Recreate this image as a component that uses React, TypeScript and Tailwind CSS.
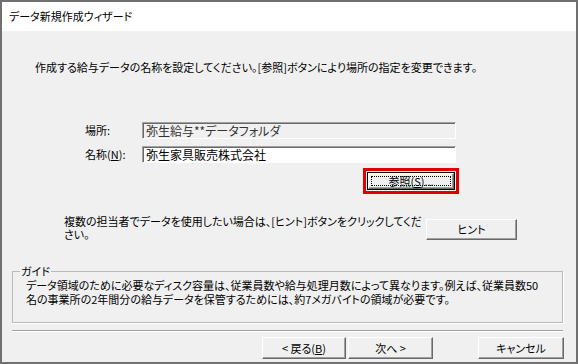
import React from 'react';

const FONT = "font-['Noto_Sans_CJK_JP','Noto_Sans',sans-serif] [font-feature-settings:'palt'] text-[11px] text-black";

// classic raised 3D button face
const RAISED =
  'border border-t-white border-l-white border-r-[#696969] border-b-[#696969] bg-[#f0f0f0] shadow-[inset_-1px_-1px_0_#a0a0a0] flex items-center justify-center';

function Button({ children, className }: { children: React.ReactNode; className?: string }) {
  return <div className={`${RAISED} ${className ?? ''}`}>{children}</div>;
}

function Field({ value, disabled }: { value: string; disabled?: boolean }) {
  return (
    <div
      className={`w-[314px] h-[17px] border border-t-[#a0a0a0] border-l-[#a0a0a0] border-r-white border-b-white shadow-[inset_1px_1px_0_#696969] flex items-center pl-[3px] leading-none text-[12px] ${
        disabled ? 'bg-[#f0f0f0] text-[#333]' : 'bg-white'
      }`}
    >
      {value}
    </div>
  );
}

export default function App() {
  return (
    <div className={`${FONT} w-[578px] h-[364px] border-2 border-[#707070] bg-[#f0f0f0] flex flex-col overflow-hidden`}>
      {/* Title */}
      <div className="h-[29px] shrink-0 bg-white flex items-center pl-[7px]">データ新規作成ウィザード</div>

      {/* Instruction */}
      <div className="mt-[28px] h-[16px] leading-[16px] pl-[33px] whitespace-nowrap">
        作成する給与データの名称を設定してください。[参照]ボタンにより場所の指定を変更できます。
      </div>

      {/* Fields */}
      <div className="mt-[47px] h-[17px] flex items-center">
        <span className="pl-[83px] w-[140px]">場所:</span>
        <Field value="弥生給与**データフォルダ" disabled />
      </div>
      <div className="mt-[7px] h-[17px] flex items-center">
        <span className="pl-[83px] w-[140px]">
          名称(<span className="underline">N</span>):
        </span>
        <Field value="弥生家具販売株式会社" />
      </div>

      {/* Browse button, highlighted */}
      <div className="mt-[5px] h-[26px] pl-[361px]">
        <div className="w-[96px] h-[26px] border-[3px] border-[#e00000] p-[1px]">
          <div className="w-full h-full border border-black">
            <Button className="w-full h-full p-[2px]">
              <span className="w-full h-full flex items-center justify-center border border-dotted border-black leading-none">
                参照(<span className="underline">S</span>)...
              </span>
            </Button>
          </div>
        </div>
      </div>

      {/* Hint */}
      <div className="mt-[21px] h-[26px] flex items-start">
        <div className="pl-[62px] w-[424px] leading-[13px] whitespace-nowrap">
          複数の担当者でデータを使用したい場合は、[ヒント]ボタンをクリックしてくだ
          <br />
          さい。
        </div>
        <Button className="mt-[4px] w-[91px] h-[21px]">ヒント</Button>
      </div>

      {/* Guide group */}
      <fieldset className="mt-[23px] ml-[10px] w-[551px] h-[59px] border border-[#b9b9b9] shadow-[1px_1px_0_white] px-[13px] min-w-0">
        <legend className="ml-[-6px] px-[1px] leading-[14px]">ガイド</legend>
        <div className="leading-[14px] whitespace-nowrap">
          データ領域のために必要なディスク容量は、従業員数や給与処理月数によって異なります。例えば、従業員数50
          <br />
          名の事業所の2年間分の給与データを保管するためには、約7メガバイトの領域が必要です。
        </div>
      </fieldset>

      {/* Separator */}
      <div className="mt-[7px] ml-[10px] w-[551px] h-[2px] border-t border-[#a0a0a0] border-b border-b-white" />

      {/* Footer buttons */}
      <div className="mt-[5px] h-[22px] flex pl-[260px]">
        <Button className="w-[84px] h-[22px]">
          &lt; 戻る(<span className="underline">B</span>)
        </Button>
        <Button className="ml-[2px] w-[85px] h-[22px]">次へ &gt;</Button>
        <Button className="ml-[45px] w-[86px] h-[22px]">キャンセル</Button>
      </div>
    </div>
  );
}
